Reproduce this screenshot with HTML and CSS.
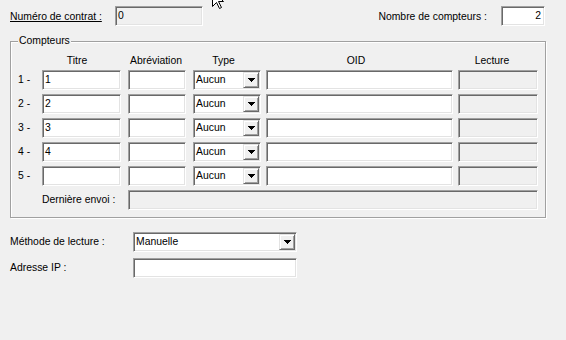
FILE: index.html
```html
<!DOCTYPE html>
<html lang="fr">
<head>
<meta charset="utf-8">
<title>Compteurs</title>
<link rel="stylesheet" href="styles.css">
</head>
<body>
<div class="window">
  <div class="top-row">
    <div class="field">
      <span class="label contract-label">Numéro de contrat :</span>
      <div class="box readonly contract"><span class="val">0</span></div>
    </div>
    <div class="field">
      <span class="label">Nombre de compteurs :</span>
      <div class="box count"><span class="val">2</span></div>
    </div>
  </div>

  <div class="group">
    <div class="group-title">Compteurs</div>
    <div class="grid head-row">
      <div></div>
      <div class="head h-titre">Titre</div>
      <div class="head h-abrev">Abréviation</div>
      <div class="head">Type</div>
      <div class="head">OID</div>
      <div class="head">Lecture</div>
    </div>
    <div class="grid rows">
      <div class="num">1 -</div>
      <div class="box w-titre"><span class="val">1</span></div>
      <div class="box w-abrev"></div>
      <div class="box combo w-type"><span class="val">Aucun</span><span class="btn"><svg width="7" height="4" viewBox="0 0 7 4"><path d="M0 0h7v1H0zM1 1h5v1H1zM2 2h3v1H2zM3 3h1v1H3z"/></svg></span></div>
      <div class="box w-oid"></div>
      <div class="box readonly w-lect"></div>

      <div class="num">2 -</div>
      <div class="box w-titre"><span class="val">2</span></div>
      <div class="box w-abrev"></div>
      <div class="box combo w-type"><span class="val">Aucun</span><span class="btn"><svg width="7" height="4" viewBox="0 0 7 4"><path d="M0 0h7v1H0zM1 1h5v1H1zM2 2h3v1H2zM3 3h1v1H3z"/></svg></span></div>
      <div class="box w-oid"></div>
      <div class="box readonly w-lect"></div>

      <div class="num">3 -</div>
      <div class="box w-titre"><span class="val">3</span></div>
      <div class="box w-abrev"></div>
      <div class="box combo w-type"><span class="val">Aucun</span><span class="btn"><svg width="7" height="4" viewBox="0 0 7 4"><path d="M0 0h7v1H0zM1 1h5v1H1zM2 2h3v1H2zM3 3h1v1H3z"/></svg></span></div>
      <div class="box w-oid"></div>
      <div class="box readonly w-lect"></div>

      <div class="num">4 -</div>
      <div class="box w-titre"><span class="val">4</span></div>
      <div class="box w-abrev"></div>
      <div class="box combo w-type"><span class="val">Aucun</span><span class="btn"><svg width="7" height="4" viewBox="0 0 7 4"><path d="M0 0h7v1H0zM1 1h5v1H1zM2 2h3v1H2zM3 3h1v1H3z"/></svg></span></div>
      <div class="box w-oid"></div>
      <div class="box readonly w-lect"></div>

      <div class="num">5 -</div>
      <div class="box w-titre"></div>
      <div class="box w-abrev"></div>
      <div class="box combo w-type"><span class="val">Aucun</span><span class="btn"><svg width="7" height="4" viewBox="0 0 7 4"><path d="M0 0h7v1H0zM1 1h5v1H1zM2 2h3v1H2zM3 3h1v1H3z"/></svg></span></div>
      <div class="box w-oid"></div>
      <div class="box readonly w-lect"></div>

      <div></div>
      <div class="lbl-last">Dernière envoi :</div>
      <div class="box readonly w-last"></div>
    </div>
  </div>

  <div class="form">
    <span class="label">Méthode de lecture :</span>
    <div class="box combo w-form"><span class="val">Manuelle</span><span class="btn"><svg width="7" height="4" viewBox="0 0 7 4"><path d="M0 0h7v1H0zM1 1h5v1H1zM2 2h3v1H2zM3 3h1v1H3z"/></svg></span></div>
    <span class="label">Adresse IP :</span>
    <div class="box w-form"></div>
  </div>
</div>

<div class="cursor">
  <svg width="13" height="20" viewBox="0 0 13 20"><path d="M0.5 0.5V16.5L4.5 12.5L7.5 18.5L9.5 17.5L6.5 11.5H11.5Z" fill="#fff" stroke="#000" stroke-width="1"/></svg>
</div>
</body>
</html>
```

FILE: styles.css
```css
html, body {
  margin: 0;
  padding: 0;
  background: #f0f0f0;
}

body {
  font-family: "Liberation Sans", Arial, sans-serif;
  font-size: 10.4px;
  color: #000;
  width: 566px;
  height: 340px;
  overflow: hidden;
  position: relative;
}

.window {
  padding: 6px 21px 0 10px;
}

.top-row {
  display: flex;
  justify-content: space-between;
  align-items: center;
  height: 20px;
  width: 535px;
}

.field {
  display: flex;
  align-items: center;
}

.contract-label {
  text-decoration: underline;
  width: 105px;
}

.field .label + .count {
  margin-left: 14px;
}

.box {
  box-sizing: border-box;
  height: 20px;
  padding: 1px;
  background: #fff;
  border-top: 1px solid #a0a0a0;
  border-left: 1px solid #a0a0a0;
  border-right: 1px solid #fff;
  border-bottom: 1px solid #fff;
  box-shadow: inset 1px 1px 0 #696969, inset -1px -1px 0 #e3e3e3;
  line-height: 16px;
  white-space: nowrap;
  overflow: hidden;
}

.box .val {
  padding-left: 1px;
}

.readonly {
  background: #f0f0f0;
}

.contract {
  width: 88px;
}

.count {
  width: 44px;
  text-align: right;
}

.count .val {
  padding-right: 2px;
}

.group {
  box-sizing: border-box;
  width: 536px;
  margin-top: 15px;
  padding: 0 7px 7px 7px;
  border: 1px solid #a0a0a0;
  box-shadow: inset 1px 1px 0 #fff, 1px 1px 0 #fff;
}

.group-title {
  width: max-content;
  margin: -7px 0 0 0;
  padding: 0 1px;
  background: #f0f0f0;
  line-height: 12px;
}

.grid {
  display: grid;
  grid-template-columns: 24px 86px 65px 73px 192px 80px;
}

.head-row {
  margin-top: 8px;
  margin-bottom: 3px;
  line-height: 12px;
}

.head {
  text-align: center;
  padding-right: 12px;
}

.head.h-titre { padding-right: 16px; }
.head.h-abrev { padding-right: 9px; }

.rows {
  grid-auto-rows: 20px;
  row-gap: 4px;
}

.num {
  line-height: 20px;
}

.w-titre { width: 79px; }
.w-abrev { width: 58px; }
.w-type { width: 68px; }
.w-oid { width: 187px; }
.w-lect { width: 80px; }

.lbl-last {
  line-height: 20px;
}

.w-last {
  grid-column: 3 / 7;
  width: 410px;
}

.combo {
  display: flex;
  align-items: center;
  justify-content: space-between;
}

.btn {
  box-sizing: border-box;
  width: 16px;
  height: 16px;
  flex: none;
  background: #f0f0f0;
  border-top: 1px solid #e3e3e3;
  border-left: 1px solid #e3e3e3;
  border-right: 1px solid #696969;
  border-bottom: 1px solid #696969;
  box-shadow: inset 1px 1px 0 #fff, inset -1px -1px 0 #a0a0a0;
  display: flex;
  align-items: center;
  justify-content: center;
}

.btn svg {
  display: block;
  fill: #000;
}

.form {
  display: grid;
  grid-template-columns: 123px 164px;
  grid-auto-rows: 20px;
  row-gap: 6px;
  margin-top: 14px;
}

.form .label {
  line-height: 20px;
}

.w-form { width: 164px; }

.cursor {
  position: absolute;
  left: 212px;
  top: -10px;
}

.cursor svg {
  display: block;
}
```
